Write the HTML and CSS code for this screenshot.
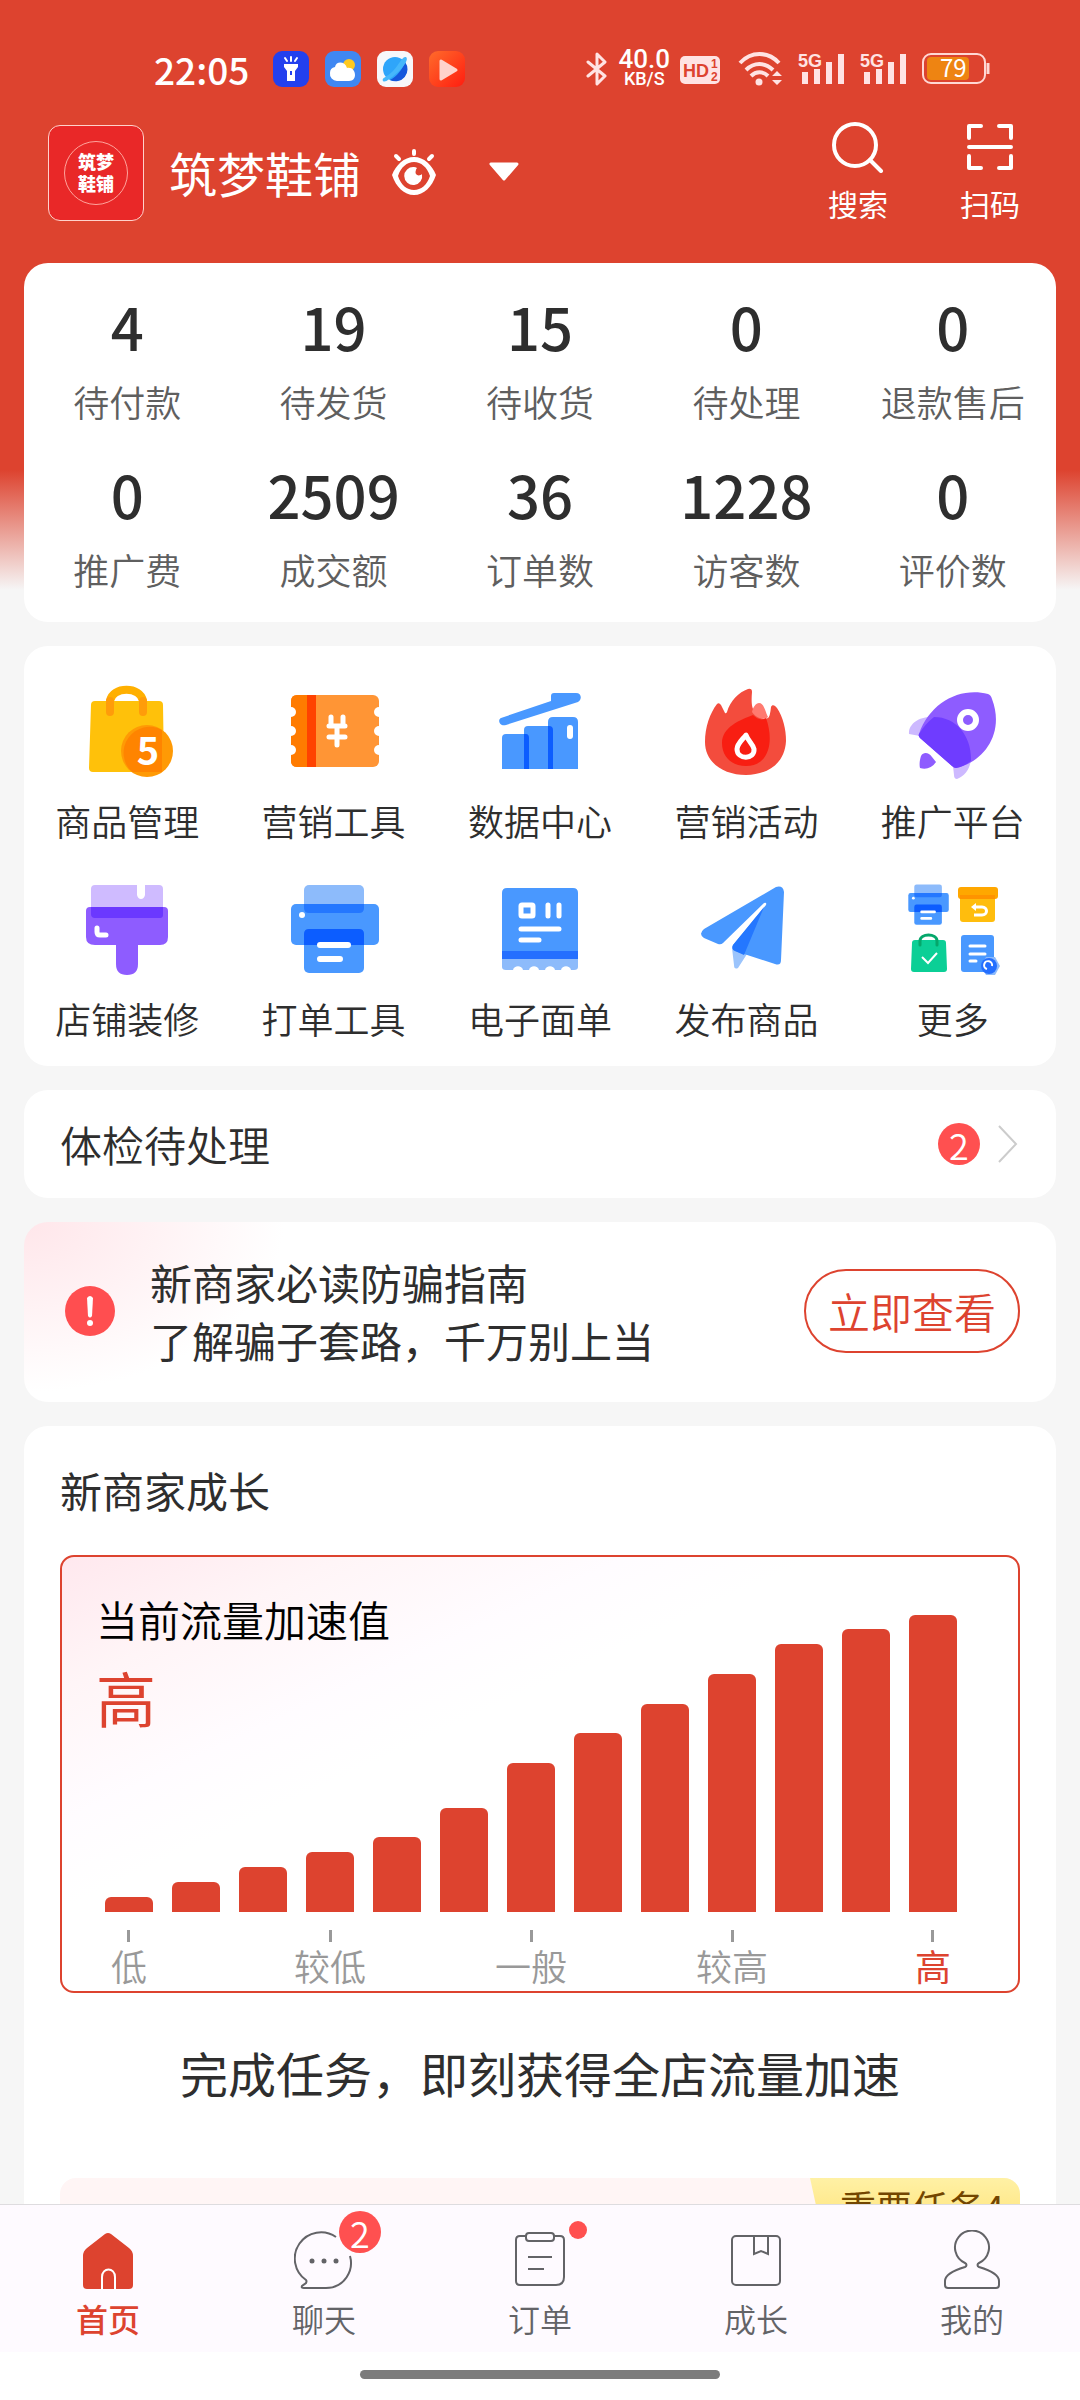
FILE: index.html
```html
<!DOCTYPE html>
<html lang="zh-CN">
  <head>
    <meta charset="UTF-8" />
    <meta name="viewport" content="width=device-width, initial-scale=1.0" />
    <title>筑梦鞋铺</title>
    <link rel="stylesheet" href="styles.css">
  </head>
  <body>
    <header>
      <div class="status-bar">
        <span class="time">22:05</span>
        <div class="app-icons">
          <svg class="app-icon" viewBox="0 0 36 36">
            <rect width="36" height="36" rx="9" fill="#2340ee" />
            <path d="M11 13h14v3l-3 4v10h-8V20l-3-4z" fill="#fff" />
            <path d="M12 7l2 3M18 6v4M24 7l-2 3" stroke="#fff" stroke-width="2" stroke-linecap="round" />
            <path d="M18 20v4" stroke="#2340ee" stroke-width="2" />
          </svg>
          <svg class="app-icon" viewBox="0 0 36 36">
            <rect width="36" height="36" rx="9" fill="#3f87f2" />
            <circle cx="24" cy="14" r="6" fill="#ffc91f" />
            <path d="M12 30a7 7 0 0 1-7-8 6 6 0 0 1 5-6c1-6 10-6 12 1 5-1 8 3 8 7 0 3-2 6-6 6z" fill="#fff" />
          </svg>
          <svg class="app-icon" viewBox="0 0 36 36">
            <rect width="36" height="36" rx="9" fill="#f7f7fa" />
            <circle cx="18" cy="18" r="12" fill="#2fa5fa" />
            <path d="M28 11a12 12 0 0 1-15 18c7-4 12-10 15-18z" fill="#1557dc" />
            <path d="M6 30c-2-3 4-4 10-10S25 5 29 6c3 2-2 10-9 16S8 32 6 30z" fill="#46b7fb" />
          </svg>
          <svg class="app-icon" viewBox="0 0 36 36">
            <defs>
              <linearGradient id="play" x1="0" y1="0" x2="1" y2="1">
                <stop offset="0" stop-color="#ff6b2b" />
                <stop offset="1" stop-color="#ff1d10" />
              </linearGradient>
            </defs>
            <rect width="36" height="36" rx="9" fill="url(#play)" />
            <path d="M12 10v18L27 19z" fill="#ffd3cb" stroke="#ffd3cb" stroke-width="3" stroke-linejoin="round" />
          </svg>
        </div>
        <div class="signals">
          <svg width="22" height="36" viewBox="0 0 22 36" fill="none" stroke="#ffe3e3" stroke-width="3" stroke-linejoin="round" stroke-linecap="round">
            <path d="M2 11l17 14-8 8V3l8 8L2 25" />
          </svg>
          <div class="speed"><b>40.0</b><small>KB/S</small></div>
          <svg width="40" height="36" viewBox="0 0 40 36">
            <rect y="5" width="40" height="28" rx="5" fill="#ffe3e3" />
            <text class="svg-text" x="3" y="26" font-size="18" fill="#dd432f">HD</text>
            <text class="svg-text" x="31" y="17" font-size="12" fill="#dd432f">1</text>
            <text class="svg-text" x="31" y="30" font-size="12" fill="#dd432f">2</text>
          </svg>
          <svg class="wifi" width="46" height="36" viewBox="0 0 46 36">
            <g fill="none" stroke="#ffe3e3" stroke-width="4">
              <path d="M2 12c11-12 28-12 39 0" />
              <path d="M8 19c8-8 19-8 27 0" />
              <path d="M13 25c5-5 12-5 17 0" />
            </g>
            <circle cx="21" cy="31" r="3.500" fill="#ffe3e3" />
            <path d="M34 25l5-5 5 5zM34 29l5 5 5-5z" fill="#ffe3e3" />
          </svg>
          <svg width="48" height="36" viewBox="0 0 48 36" fill="#ffe3e3">
            <text class="svg-text" x="0" y="16" font-size="18">5G</text>
            <path d="M4 21h6v12H4zM16 18h6v15h-6zM28 11h6v22h-6zM40 3h6v30h-6z" />
          </svg>
          <svg width="48" height="36" viewBox="0 0 48 36" fill="#ffe3e3">
            <text class="svg-text" x="0" y="16" font-size="18">5G</text>
            <path d="M4 21h6v12H4zM16 18h6v15h-6zM28 11h6v22h-6zM40 3h6v30h-6z" />
          </svg>
          <svg width="68" height="36" viewBox="0 0 68 36">
            <rect x="1" y="3" width="62" height="29" rx="8" fill="none" stroke="#ffd8d4" stroke-width="2" />
            <rect x="5" y="6" width="42" height="23" rx="4" fill="#ee8412" />
            <path d="M66 12v11" stroke="#ffd8d4" stroke-width="3" />
            <text class="battery-text" x="18" y="26">79</text>
          </svg>
        </div>
      </div>

      <div class="shop-bar">
        <div class="shop-logo"><span>筑梦<br>鞋铺</span></div>
        <h1>筑梦鞋铺</h1>
        <svg class="eye" viewBox="0 0 44 46" fill="#fff">
          <path fill-rule="evenodd" d="M22 8C12 8 4 16 0 26c4 12 12 20 22 20s18-8 22-20C40 16 32 8 22 8zm0 5c7 0 13 5 16 14-3 9-9 14-16 14S9 36 6 27c3-9 9-14 16-14z" />
          <path d="M22 18a9 9 0 1 0 8 7c-3 3-8 1-6-4 0-1 1-2 1-2a9 9 0 0 0-3-1z" />
          <path d="M22 2v3M4 7l3 3M40 7l-3 3" stroke="#fff" stroke-width="4" stroke-linecap="round" />
        </svg>
        <button class="switch-shop" aria-label="切换店铺">
          <svg width="32" height="20" viewBox="0 0 32 20"><path d="M3 2h26L16 17z" fill="#fff" stroke="#fff" stroke-width="3" stroke-linejoin="round" /></svg>
        </button>
        <button class="top-action">
          <svg viewBox="0 0 52 52" fill="none" stroke="#fff" stroke-width="4" stroke-linecap="round"><circle cx="23" cy="24" r="21" /><path d="M38 39l11 11" /></svg>
          <span>搜索</span>
        </button>
        <button class="top-action">
          <svg viewBox="0 0 52 52" fill="none" stroke="#fff" stroke-width="4" stroke-linecap="round" stroke-linejoin="round"><path d="M5 17V5h12M35 5h12v12M5 35v12h12M35 47h12V35M5 26h42" /></svg>
          <span>扫码</span>
        </button>
      </div>
    </header>

    <main>
      <section class="card stats">
        <a href="#"><strong>4</strong><span>待付款</span></a>
        <a href="#"><strong>19</strong><span>待发货</span></a>
        <a href="#"><strong>15</strong><span>待收货</span></a>
        <a href="#"><strong>0</strong><span>待处理</span></a>
        <a href="#"><strong>0</strong><span>退款售后</span></a>
        <a href="#"><strong>0</strong><span>推广费</span></a>
        <a href="#"><strong>2509</strong><span>成交额</span></a>
        <a href="#"><strong>36</strong><span>订单数</span></a>
        <a href="#"><strong>1228</strong><span>访客数</span></a>
        <a href="#"><strong>0</strong><span>评价数</span></a>
      </section>

      <section class="card tools">
        <a href="#">
          <svg viewBox="0 0 96 96">
            <path d="M16 17h64q4 0 4 4l1 63q0 4-4 4H14q-4 0-4-4l2-63q0-4 4-4z" fill="#ffc10a" />
            <path d="M31 17c2-15 31-15 33 0" fill="none" stroke="#ffb000" stroke-width="8" />
            <path d="M31 17v11M64 17v11" stroke="#ff9c0a" stroke-width="8" stroke-linecap="round" />
            <circle cx="68" cy="67" r="26" fill="#ff9a05" />
            <path d="M83 46v42H53a26 26 0 0 1 30-42z" fill="#ff8400" />
            <text class="bag-text" x="69" y="81">5</text>
          </svg>
          <span>商品管理</span>
        </a>
        <a href="#">
          <svg viewBox="0 0 96 96">
            <rect x="5" y="11" width="88" height="72" rx="6" fill="#ff9535" />
            <path d="M22 11H11q-6 0-6 6v60q0 6 6 6h11z" fill="#ff7b00" />
            <path d="M21 11h9v72h-9z" fill="#ff4200" />
            <g fill="#fff">
              <circle cx="5" cy="28" r="5" /><circle cx="5" cy="47" r="5" /><circle cx="5" cy="66" r="5" />
              <circle cx="93" cy="28" r="5" /><circle cx="93" cy="47" r="5" /><circle cx="93" cy="66" r="5" />
            </g>
            <path d="M45 33v9M57 33v9M43 42h16M43 53h16M51 42v19" stroke="#fff" stroke-width="5" stroke-linecap="round" />
          </svg>
          <span>营销工具</span>
        </a>
        <a href="#">
          <svg viewBox="0 0 96 96" fill="#4998ff">
            <path d="M10 54q0-4 4-4h20v35H10z" />
            <path d="M32 46q0-4 4-4h22v43H32z" />
            <path d="M56 38q0-5 5-5h20q5 0 5 5v47H56z" />
            <path d="M32 50h2q3 0 3 4v31h-5zM56 42h1q4 0 4 4v39h-5z" fill="#0c5dff" />
            <path d="M78 44v8" stroke="#fff" stroke-width="6" stroke-linecap="round" />
            <path d="M9 34l50-17v-5q0-3 3-3h22c6 0 6 7 2 9L14 41c-6 2-9-5-5-7z" />
          </svg>
          <span>数据中心</span>
        </a>
        <a href="#">
          <svg viewBox="0 0 96 96">
            <path d="M7 58c0-15 5-29 12-38q2-2 4 1l4 8q1 1 2-1C32 17 41 8 50 5q4-1 4 3c-1 12 0 17 4 22 4 4 8 6 12 4q2-1 3-11c1-3 4-2 6 1 6 9 9 21 9 33-1 22-18 34-40 34S7 79 7 58z" fill="#f34c3d" />
            <path d="M54 28c1-5 4-9 7-9 5 0 6 8 9 14-4 4-12 1-16-5z" fill="#ff7a70" />
            <path d="M24 59c0-16 18-23 31-28 4 4 9 6 13 3 8 22 4 48-20 48-14 0-24-9-24-23z" fill="#f81e12" />
            <path d="M48 51c-4 5-9 9-9 14 0 11 18 11 17 0-1-5-6-8-8-14z" fill="none" stroke="#fff" stroke-width="5" stroke-linejoin="round" />
          </svg>
          <span>营销活动</span>
        </a>
        <a href="#">
          <svg viewBox="0 0 96 96">
            <path d="M4 50c-1-12 15-20 29-16l-18 18zM66 68c1 14-4 23-14 27q-3 0-3-4l-1-9z" fill="#cdb9ff" />
            <path d="M14 50C25 19 54 3 83 10q3 1 4 5c13 34-8 63-36 69q-2 0-4-2L15 54q-2-2-1-4z" fill="#8e5cff" />
            <path d="M29 33c23 0 38 20 37 44-5 4-10 6-15 7q-2 0-4-2L15 54q-2-2-1-4 6-10 15-17z" fill="#6f3cff" />
            <circle cx="63" cy="36" r="8" fill="none" stroke="#fff" stroke-width="6" />
            <path d="M16 72c3-5 8-3 11 1l4 5c-4 6-10 8-16 6-1-4 0-9 1-12z" fill="#8e5cff" />
          </svg>
          <span>推广平台</span>
        </a>
        <a href="#">
          <svg viewBox="0 0 96 96">
            <path d="M16 3h42v10q1 4 4 4t4-4V3h14q4 0 4 4v20H12V7q0-4 4-4z" fill="#cfbbff" />
            <path d="M11 25h74q4 0 4 4v26q0 8-8 8H59v19q0 11-11 11T37 82V63H16q-9 0-9-8V29q0-4 4-4z" fill="#8e5cff" />
            <path d="M12 25h72v8q0 3-3 3H16q-4 0-4-4z" fill="#6b38ff" />
            <path d="M18 46v4q0 3 3 3h6" fill="none" stroke="#fff" stroke-width="5" stroke-linecap="round" />
          </svg>
          <span>店铺装修</span>
        </a>
        <a href="#">
          <svg viewBox="0 0 96 96">
            <g id="printer">
              <rect x="18" y="3" width="60" height="30" rx="5" fill="#8dbbfb" />
              <rect x="5" y="22" width="88" height="41" rx="5" fill="#4998ff" />
              <path d="M18 22h60v4q0 5-5 5H23q-5 0-5-5z" fill="#2477ff" />
              <rect x="18" y="47" width="60" height="44" rx="5" fill="#4998ff" />
              <path d="M18 63V52q0-5 5-5h50q5 0 5 5v11z" fill="#0c5dff" />
              <circle cx="16" cy="33" r="3" fill="#fff" />
              <path d="M34 63h28M34 77h20" stroke="#fff" stroke-width="6" stroke-linecap="round" />
            </g>
          </svg>
          <span>打单工具</span>
        </a>
        <a href="#">
          <svg viewBox="0 0 96 96">
            <path d="M10 76h76v9q0 3-4 3h-3c-1-5-9-5-10 0h-6c-1-5-9-5-10 0h-6c-1-5-9-5-10 0h-6c-1-5-9-5-10 0h-7q-4 0-4-3z" fill="#8dbbfb" />
            <path d="M15 6h66q5 0 5 5v60H10V11q0-5 5-5z" fill="#4998ff" />
            <path d="M10 69h76v8H10z" fill="#246fff" />
            <rect x="29" y="23" width="12" height="11" rx="1" fill="none" stroke="#fff" stroke-width="5" />
            <path d="M56 23v11M67 23v11M29 47h38M29 58h18" stroke="#fff" stroke-width="5" stroke-linecap="round" />
          </svg>
          <span>电子面单</span>
        </a>
        <a href="#">
          <svg viewBox="0 0 96 96">
            <path d="M34 66l15 6-9 14q-4 2-4-3z" fill="#9bc4fc" />
            <path d="M78 5q7-2 8 5l-3 68q0 6-6 4L37 69q-4-2-2-6l33-40q1-3-2-2L25 61q-2 2-5 1L6 56q-6-4 0-9z" fill="#4998ff" />
            <path d="M66 25L46 73l-9-4q-4-2-2-6z" fill="#2477ff" />
          </svg>
          <span>发布商品</span>
        </a>
        <a href="#">
          <svg viewBox="0 0 96 96">
            <use href="#printer" transform="translate(1 1) scale(.46)" />
            <path d="M55 14h35v23q0 3-3 3H58q-3 0-3-3z" fill="#ffbd0d" />
            <rect x="53" y="5" width="40" height="12" rx="3" fill="#ffa700" />
            <path d="M55 13h35v4H55z" fill="#ff9300" />
            <path d="M69 25h8c6 0 6 8 0 8h-8" fill="none" stroke="#fff" stroke-width="3" />
            <path d="M66 25l5-4v8z" fill="#fff" />
            <path d="M10 58h28q3 0 3 3l1 26q0 3-3 3H9q-3 0-3-3l1-26q0-3 3-3z" fill="#0bcf96" />
            <path d="M15 63v-4c0-8 17-8 17 0v4" fill="none" stroke="#05a76b" stroke-width="3" stroke-linecap="round" />
            <path d="M17 75l6 6 9-10" fill="none" stroke="#fff" stroke-width="2" />
            <rect x="56" y="53" width="33" height="37" rx="3" fill="#4998ff" />
            <path d="M65 64h15M65 72h15M65 79h6" stroke="#fff" stroke-width="3" stroke-linecap="round" />
            <path d="M81 75h9l5 9-5 9h-9l-5-9z" fill="#8dbbfb" />
            <circle cx="84" cy="84" r="8" fill="#246fff" />
            <path d="M82 87a4 4 0 1 1 5-3" fill="none" stroke="#fff" stroke-width="2" />
          </svg>
          <span>更多</span>
        </a>
      </section>

      <a class="card check-row" href="#">
        <span>体检待处理</span>
        <span class="badge">2</span>
        <svg width="20" height="38" viewBox="0 0 20 38" fill="none" stroke="#ccc" stroke-width="2"><path d="M1 1l17 18L1 37" /></svg>
      </a>

      <section class="card notice">
        <svg width="50" height="50" viewBox="0 0 50 50">
          <circle cx="25" cy="25" r="25" fill="#ff4e50" />
          <path d="M22 12q3-4 6 0l-1 18q-2 3-4 0z" fill="#fff" />
          <circle cx="25" cy="37" r="3" fill="#fff" />
        </svg>
        <p>新商家必读防骗指南<br>了解骗子套路，千万别上当</p>
        <button>立即查看</button>
      </section>

      <section class="card growth">
        <h2>新商家成长</h2>
        <div class="chart">
          <div class="chart-head">
            <span>当前流量加速值</span>
            <strong>高</strong>
          </div>
          <div class="bars">
            <div class="col"><i style="height: 15px"></i><span>低</span></div>
            <div class="col"><i style="height: 30px"></i></div>
            <div class="col"><i style="height: 45px"></i></div>
            <div class="col"><i style="height: 60px"></i><span>较低</span></div>
            <div class="col"><i style="height: 75px"></i></div>
            <div class="col"><i style="height: 104px"></i></div>
            <div class="col"><i style="height: 149px"></i><span>一般</span></div>
            <div class="col"><i style="height: 179px"></i></div>
            <div class="col"><i style="height: 208px"></i></div>
            <div class="col"><i style="height: 238px"></i><span>较高</span></div>
            <div class="col"><i style="height: 268px"></i></div>
            <div class="col"><i style="height: 283px"></i></div>
            <div class="col current"><i style="height: 297px"></i><span>高</span></div>
          </div>
        </div>
        <h3>完成任务，即刻获得全店流量加速</h3>
        <div class="task"><span>重要任务4</span></div>
      </section>
    </main>

    <nav>
      <a class="active" href="#">
        <svg viewBox="0 0 60 60">
          <path d="M27 4q3-2 6 0l18 14q4 3 4 8v29q0 4-4 4H9q-4 0-4-4V26q0-5 4-8z" fill="#dd432f" />
          <path d="M24 60V47c0-10 13-10 13 0v13" fill="none" stroke="#fff" stroke-width="2" />
        </svg>
        <span>首页</span>
      </a>
      <a href="#">
        <svg viewBox="0 0 60 60" fill="none" stroke="#636367" stroke-width="2">
          <path d="M42 7A26 26 0 0 0 12 50q1 1 0 3l-4 3q-1 2 2 2h22c19 0 28-18 24-32" />
          <g fill="#636367" stroke="none"><circle cx="18" cy="31" r="2.500" /><circle cx="30" cy="31" r="2.500" /><circle cx="42" cy="31" r="2.500" /></g>
        </svg>
        <b class="badge">2</b>
        <span>聊天</span>
      </a>
      <a href="#">
        <svg viewBox="0 0 60 60" fill="none" stroke="#636367" stroke-width="2">
          <path d="M16 6h-6q-4 0-4 4v41q0 4 4 4h36q8 0 8-8V10q0-4-4-4h-6" />
          <rect x="16" y="3" width="28" height="8" rx="3" />
          <path d="M18 27h24M18 39h16" />
        </svg>
        <b class="dot"></b>
        <span>订单</span>
      </a>
      <a href="#">
        <svg viewBox="0 0 60 60" fill="none" stroke="#636367" stroke-width="2">
          <rect x="6" y="6" width="48" height="49" rx="4" />
          <path d="M28 6v18l7-3 7 3V6" />
        </svg>
        <span>成长</span>
      </a>
      <a href="#">
        <svg viewBox="0 0 60 60" fill="none" stroke="#636367" stroke-width="2">
          <path d="M23 37c2-1 2-3 0-4a17 17 0 1 1 14 0c-2 1-2 3 0 4 10 3 20 7 20 14v4q0 3-3 3H6q-3 0-3-3v-4c0-7 10-11 20-14z" />
        </svg>
        <span>我的</span>
      </a>
    </nav>
    <div class="home-indicator"></div>
  </body>
</html>
```
FILE: styles.css
```css
* {
  box-sizing: border-box;
}
body {
  margin: 0;
  height: 100vh;
  display: flex;
  flex-direction: column;
  overflow: hidden;
  font-family: "Noto Sans CJK SC", sans-serif;
  font-weight: 350;
  color: #2e2e2e;
  background: linear-gradient(#dd432f 470px, #f6f6f6 590px);
}
h1, h2, h3, p {
  margin: 0;
}
a {
  color: inherit;
  text-decoration: none;
}
button {
  padding: 0;
  border: none;
  background: none;
  font: inherit;
  color: inherit;
}
svg {
  display: block;
  flex-shrink: 0;
}

/* header */
header {
  flex-shrink: 0;
  color: #fff;
}
.status-bar {
  display: flex;
  align-items: center;
  height: 112px;
  padding: 25px 90px 0 154px;
}
.time {
  font-size: 37px;
  font-weight: 500;
  line-height: 36px;
}
.app-icons {
  display: flex;
  gap: 16px;
  margin-left: 24px;
}
.app-icon {
  width: 36px;
  height: 36px;
}
.signals {
  display: flex;
  align-items: center;
  gap: 14px;
  margin-left: auto;
}
.speed {
  display: flex;
  flex-direction: column;
  align-items: center;
  margin: 0 -4px;
  font-family: Roboto, sans-serif;
}
.speed b {
  font-size: 26px;
  font-weight: 500;
  line-height: 21px;
}
.speed small {
  font-size: 18px;
  font-weight: 500;
  line-height: 18px;
}
.wifi {
  margin-left: 4px;
}
.svg-text {
  font-family: "Liberation Sans", sans-serif;
  font-weight: 700;
}
.battery-text {
  font-size: 24px;
  font-weight: 400;
  fill: #fff;
}
.shop-bar {
  display: flex;
  align-items: center;
  height: 151px;
  padding: 0 45px 32px 48px;
}
.shop-logo {
  display: flex;
  align-items: center;
  justify-content: center;
  width: 96px;
  height: 96px;
  margin-top: 2px;
  border: 1px solid #ffd2cb;
  border-radius: 12px;
  background: #e92828;
}
.shop-logo span {
  width: 64px;
  height: 64px;
  padding-top: 8px;
  border: 1px solid #ffa49c;
  border-radius: 50%;
  font-size: 18px;
  font-weight: 900;
  line-height: 22px;
  text-align: center;
}
h1 {
  margin-left: 25px;
  font-size: 48px;
  font-weight: 400;
  line-height: 64px;
}
.eye {
  width: 44px;
  height: 46px;
  margin-left: 31px;
}
.switch-shop {
  margin-left: 52px;
}
.top-action {
  display: flex;
  flex-direction: column;
  align-items: center;
  gap: 10px;
  width: 90px;
  font-size: 30px;
  font-weight: 400;
  line-height: 40px;
}
.top-action svg {
  width: 52px;
  height: 52px;
}
.switch-shop + .top-action {
  margin: 0 42px 0 auto;
}

/* cards */
main {
  flex: 1;
  min-height: 0;
  display: flex;
  flex-direction: column;
  gap: 24px;
  padding: 0 24px;
  overflow: hidden;
}
.card {
  flex-shrink: 0;
  border-radius: 24px;
  background: #fff;
}
.stats {
  display: grid;
  grid-template-columns: repeat(5, 1fr);
  gap: 33px 0;
  padding: 27px 0 29px;
}
.stats a {
  display: flex;
  flex-direction: column;
  align-items: center;
  gap: 15px;
}
.stats strong {
  font-size: 58px;
  font-weight: 500;
  line-height: 72px;
}
.stats span {
  font-size: 36px;
  line-height: 48px;
  color: #5f5f5f;
}
.tools {
  display: grid;
  grid-template-columns: repeat(5, 1fr);
  gap: 38px 0;
  padding: 38px 0 24px;
}
.tools a {
  display: flex;
  flex-direction: column;
  align-items: center;
  gap: 16px;
}
.tools svg {
  width: 96px;
  height: 96px;
}
.tools span {
  font-size: 36px;
  line-height: 48px;
}
.bag-text {
  font-size: 38px;
  font-weight: 700;
  fill: #fff;
  text-anchor: middle;
}
.badge {
  width: 42px;
  height: 42px;
  border-radius: 50%;
  background: #ff5050;
  color: #fff;
  font-size: 36px;
  font-weight: 350;
  line-height: 42px;
  text-align: center;
}
.check-row {
  display: flex;
  align-items: center;
  padding: 22px 38px 22px 36px;
  font-size: 42px;
  line-height: 64px;
}
.check-row .badge {
  margin: 0 18px 0 auto;
}
.notice {
  display: flex;
  align-items: center;
  padding: 31px 36px 33px;
  background: radial-gradient(ellipse 260px 170px at 0 0, #ffe6ea, #fff);
}
.notice svg {
  margin-left: 5px;
}
.notice p {
  margin-left: 35px;
  font-size: 42px;
  font-weight: 400;
  line-height: 58px;
}
.notice button {
  width: 216px;
  height: 84px;
  margin-left: auto;
  border: 2px solid #dd432f;
  border-radius: 42px;
  color: #dd432f;
  font-size: 42px;
  line-height: 60px;
}

/* growth chart */
.growth {
  padding: 34px 36px;
}
h2 {
  font-size: 42px;
  font-weight: 400;
  line-height: 60px;
}
.chart {
  display: grid;
  margin-top: 35px;
  padding: 32px 61px 0 34px;
  border: 2px solid #dd432f;
  border-radius: 14px;
  background: linear-gradient(155deg, #ffe8ee, #fff5f7 15%, #fffcff 30%, #fff 40%);
}
.chart-head,
.bars {
  grid-area: 1 / 1;
}
.chart-head {
  display: flex;
  flex-direction: column;
  color: #000;
  font-size: 42px;
  line-height: 60px;
}
.chart-head strong {
  margin-top: 8px;
  color: #dd432f;
  font-size: 60px;
  font-weight: 400;
  line-height: 80px;
}
.bars {
  display: flex;
  justify-content: space-between;
  align-items: flex-end;
  padding: 26px 0 0 9px;
}
.col {
  display: flex;
  flex-direction: column;
  align-items: center;
  width: 48px;
  padding-bottom: 79px;
}
.col i {
  width: 48px;
  border-radius: 6px 6px 0 0;
  background: #dd432f;
}
.col span {
  height: 79px;
  margin-bottom: -79px;
  color: #999;
  font-size: 36px;
  line-height: 46px;
  white-space: nowrap;
}
.col span::before {
  content: "";
  display: block;
  width: 3px;
  height: 12px;
  margin: 18px auto 0;
  background: #999;
}
.current span {
  color: #dd432f;
  font-weight: 400;
}
h3 {
  margin-top: 47px;
  font-size: 48px;
  font-weight: 400;
  line-height: 64px;
  text-align: center;
}
.task {
  display: flex;
  justify-content: flex-end;
  height: 200px;
  margin-top: 74px;
  border-radius: 16px;
  background: #fff5f5;
  overflow: hidden;
}
.task span {
  width: 210px;
  height: 64px;
  padding: 4px 0 0 30px;
  background: linear-gradient(#fff1a5, #ffdf6f);
  clip-path: polygon(0 0, 100% 0, 100% 100%, 14px 100%);
  color: #734600;
  font-size: 36px;
  font-weight: 400;
  line-height: 48px;
  white-space: nowrap;
}

/* bottom tabs */
nav {
  flex-shrink: 0;
  display: grid;
  grid-template-columns: repeat(5, 1fr);
  padding: 25px 0 12px;
  border-top: 1px solid #dedcdf;
  background: #fefaff;
  color: #636367;
}
nav a {
  position: relative;
  display: flex;
  flex-direction: column;
  align-items: center;
  gap: 6px;
  font-size: 32px;
  line-height: 44px;
}
nav svg {
  width: 60px;
  height: 60px;
}
nav .active {
  color: #dd432f;
  font-weight: 500;
}
nav .badge {
  position: absolute;
  top: -19px;
  left: calc(50% + 15px);
}
.dot {
  position: absolute;
  top: -9px;
  left: calc(50% + 29px);
  width: 18px;
  height: 18px;
  border-radius: 50%;
  background: #ff5050;
}
.home-indicator {
  flex-shrink: 0;
  height: 48px;
  padding: 18px 0 21px;
  background: #fff;
}
.home-indicator::before {
  content: "";
  display: block;
  width: 360px;
  height: 9px;
  margin: 0 auto;
  border-radius: 5px;
  background: #7c7c7c;
}
```
